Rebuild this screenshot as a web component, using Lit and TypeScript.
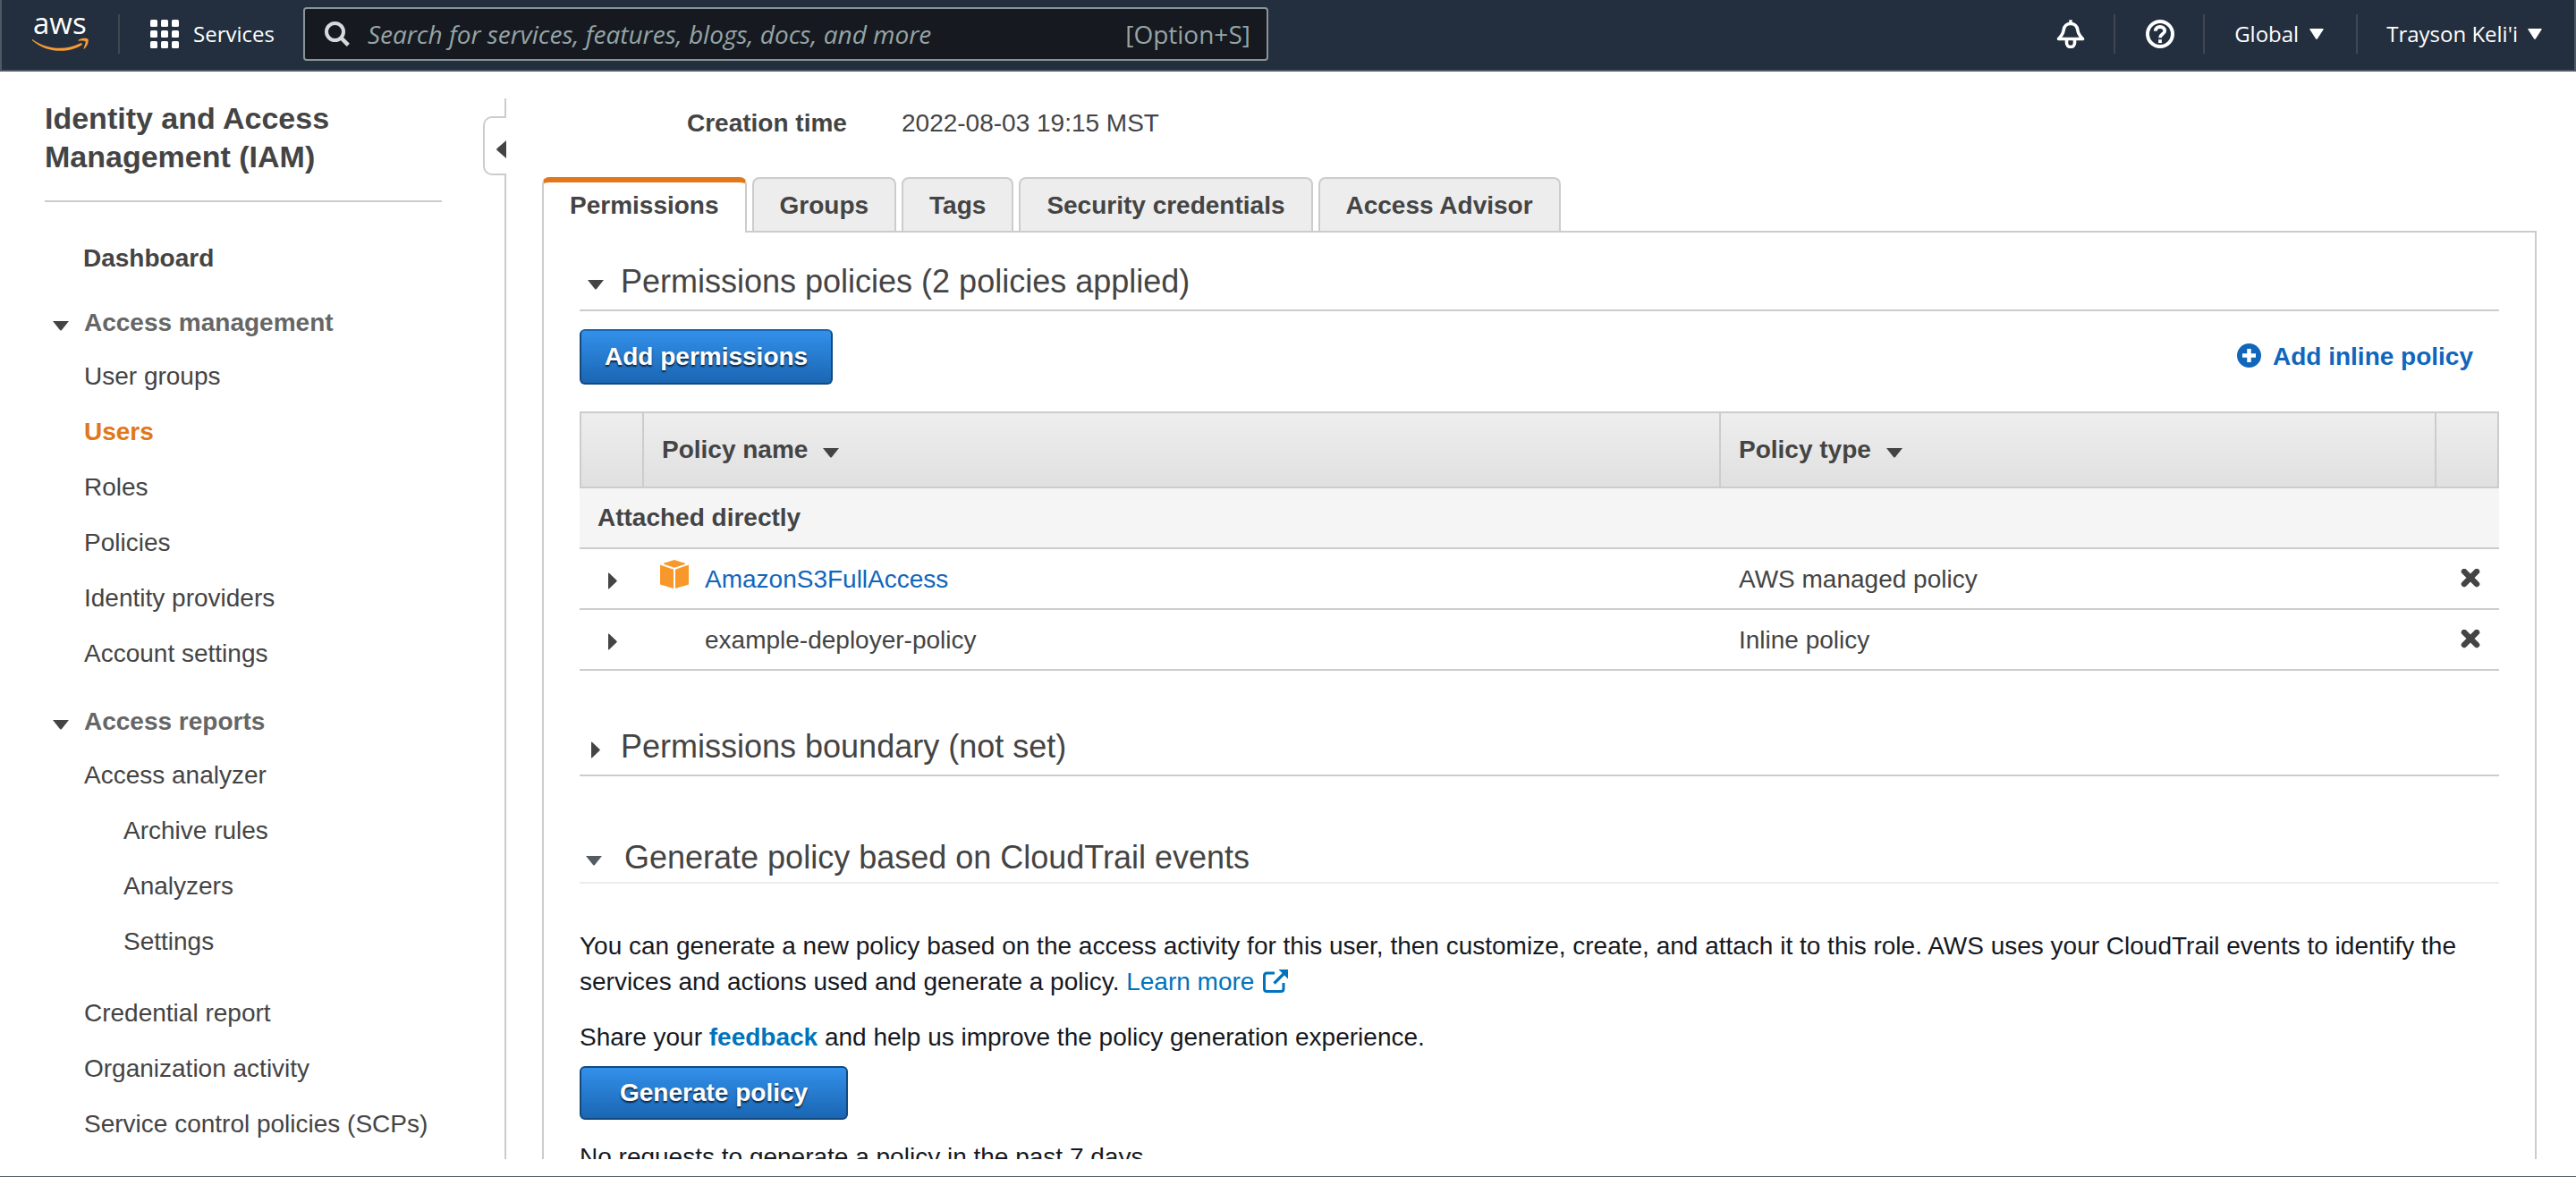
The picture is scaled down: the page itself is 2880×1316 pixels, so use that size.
import { LitElement, html, css, svg } from "lit";
import { customElement, state } from "lit/decorators.js";
import { classMap } from "lit/directives/class-map.js";

interface NavItem {
  label: string;
  nested?: boolean;
  spaced?: boolean;
}

interface NavGroup {
  label: string;
  items: NavItem[];
}

interface Policy {
  name: string;
  type: string;
  managed: boolean;
}

const NAV_GROUPS: NavGroup[] = [
  {
    label: "Access management",
    items: [
      { label: "User groups" },
      { label: "Users" },
      { label: "Roles" },
      { label: "Policies" },
      { label: "Identity providers" },
      { label: "Account settings" },
    ],
  },
  {
    label: "Access reports",
    items: [
      { label: "Access analyzer" },
      { label: "Archive rules", nested: true },
      { label: "Analyzers", nested: true },
      { label: "Settings", nested: true },
      { label: "Credential report", spaced: true },
      { label: "Organization activity" },
      { label: "Service control policies (SCPs)" },
    ],
  },
];

const TABS = ["Permissions", "Groups", "Tags", "Security credentials", "Access Advisor"];

const POLICIES: Policy[] = [
  { name: "AmazonS3FullAccess", type: "AWS managed policy", managed: true },
  { name: "example-deployer-policy", type: "Inline policy", managed: false },
];

/* Disclosure arrow, drawn slightly below the middle of its line. */
const arrow = (open: boolean) => html`
  <svg class="arrow" width="18" height="26" viewBox="0 0 18 26" aria-hidden="true">
    ${open
      ? svg`<path d="M0 11h18L10 21q-1 1-2 0z" fill="currentColor" />`
      : svg`<path d="M4 8q0-1 1-.2L13.400 15.800q.8.7 0 1.400L5 25.300q-1 .6-1-.4z" fill="currentColor" />`}
  </svg>
`;

const menuArrow = html`
  <svg width="16" height="12" viewBox="0 0 16 12" aria-hidden="true">
    <path d="M1 0h14q1.200 0 .6 1L9 11.300q-1 1.200-2 0L.4 1Q-.2 0 1 0z" fill="#fff" />
  </svg>
`;

@customElement("console-header")
export class ConsoleHeader extends LitElement {
  static styles = css`
    :host {
      display: block;
      font-family: "Open Sans", "Noto Sans", sans-serif;
    }
    .bar {
      display: flex;
      align-items: center;
      box-sizing: border-box;
      height: 80px;
      padding: 0 36px 2px 34px;
      background: #232f3e;
      border: 2px solid #4f5964;
      border-top: 0;
      color: #fff;
    }
    svg {
      display: block;
      flex: none;
    }
    .logo-text {
      font-family: "Open Sans", "Noto Sans", sans-serif;
      font-size: 33px;
      font-weight: 500;
    }
    .divider {
      flex: none;
      width: 2px;
      height: 44px;
      background: #414750;
    }
    .divider.first {
      margin-left: 33px;
    }
    button {
      display: flex;
      align-items: center;
      padding: 0;
      background: none;
      border: 0;
      color: #fff;
      font: 500 24px/40px "Open Sans", "Noto Sans", sans-serif;
      white-space: nowrap;
    }
    .services {
      gap: 16px;
      margin: 0 32px 0 34px;
    }
    .search {
      display: flex;
      align-items: center;
      flex: 0 1 1079px;
      box-sizing: border-box;
      height: 60px;
      padding: 0 18px 0 22px;
      background: #16191f;
      border: 2px solid #879596;
      border-radius: 4px;
      color: #95a5a6;
      font-size: 28px;
      line-height: 40px;
    }
    .search input {
      flex: 1;
      min-width: 0;
      height: 52px;
      margin-left: 20px;
      padding: 0;
      background: none;
      border: 0;
      outline: 0;
      color: #fff;
      font: inherit;
    }
    .search input::placeholder {
      color: #95a5a6;
      font-style: italic;
      opacity: 1;
    }
    .actions {
      display: flex;
      align-items: center;
      margin-left: auto;
    }
    .icon {
      margin: 0 32px 0 34px;
    }
    .menu {
      gap: 12px;
      margin: 0 36px 0 33px;
    }
    .menu.last {
      gap: 11px;
      margin: 0 0 0 32px;
    }
  `;

  render() {
    return html`
      <header class="bar">
        <a href="#home" aria-label="aws">
          <svg width="63" height="72" viewBox="0 -14 63 72">
            <text class="logo-text" x="1" y="22" fill="#fff">aws</text>
            <path
              d="M.3 28C18 40.500 38 40 53.500 32.500c2-.9 3.400.8 1.700 2C40.500 43.500 17 44 0 29.200-.3 28.500 0 27.800.3 28z"
              fill="#f79a32"
            />
            <path
              d="M51.500 28.800c2.800-2.300 9.600-2.600 10.900-1 1.200 1.700-.4 7.700-4 10.700-.7.500-1.200.2-.9-.5 1-2.500 2.700-6.700 2-7.700-.8-1.100-5-.9-7.200-.6-.9.100-1.200-.5-.8-.9z"
              fill="#f79a32"
            />
          </svg>
        </a>
        <span class="divider first"></span>
        <button class="services" type="button">
          <svg width="32" height="32" viewBox="0 0 32 32" fill="#fff" aria-hidden="true">
            ${[0, 12, 24].map((y) =>
              [0, 12, 24].map((x) => svg`<rect x=${x} y=${y} width="8" height="8" rx="1.500" />`)
            )}
          </svg>
          <span>Services</span>
        </button>
        <label class="search">
          <svg width="28" height="28" viewBox="0 0 28 28" fill="none" stroke="#d5dbdb" aria-hidden="true">
            <circle cx="11.500" cy="11.500" r="9.500" stroke-width="4" />
            <path d="M18 18l8.300 8.300" stroke-width="4.500" />
          </svg>
          <input type="search" placeholder="Search for services, features, blogs, docs, and more" />
          <span>[Option+S]</span>
        </label>
        <div class="actions">
          <button class="icon" type="button" aria-label="Notifications">
            <svg width="32" height="32" viewBox="0 0 32 32" fill="none" stroke="#fff" aria-hidden="true">
              <path
                d="M2.500 21.500C6 18 7.500 16 8.200 11.500 9 6.500 11.500 4.500 16 4.500s7 2 7.800 7c.7 4.500 2.200 6.500 5.700 10z"
                stroke-width="3.600"
                stroke-linejoin="round"
              />
              <path d="M16 5V.3" stroke-width="3.600" />
              <path d="M11.500 23v3a4.500 4.500 0 0 0 9 0v-3" stroke-width="3.600" />
            </svg>
          </button>
          <span class="divider"></span>
          <button class="icon" type="button" aria-label="Help">
            <svg width="32" height="32" viewBox="0 0 32 32" fill="none" stroke="#fff" aria-hidden="true">
              <circle cx="16" cy="16" r="14" stroke-width="4" />
              <path
                d="M10.800 12.800C10.800 9.700 13 8 16 8s5.200 1.700 5.200 4.400c0 3.700-5.200 3.700-5.200 7.800"
                stroke-width="3.800"
              />
              <path d="M16 22.200v3.900" stroke-width="3.800" />
            </svg>
          </button>
          <span class="divider"></span>
          <button class="menu" type="button"><span>Global</span>${menuArrow}</button>
          <span class="divider"></span>
          <button class="menu last" type="button"><span>Trayson Keli'i</span>${menuArrow}</button>
        </div>
      </header>
    `;
  }
}

@customElement("side-nav")
export class SideNav extends LitElement {
  @state() private current = "Users";

  static styles = css`
    :host {
      display: flex;
      flex: none;
      padding-top: 30px;
      color: #444;
      font-size: 28px;
    }
    .nav {
      box-sizing: border-box;
      width: 540px;
      padding: 0 46px 0 50px;
    }
    h1 {
      margin: 0;
      padding: 1px 100px 27px 0;
      border-bottom: 2px solid #ccc;
      font-size: 34px;
      line-height: 43px;
    }
    ul {
      margin: 0;
      padding: 0 0 0 44px;
      list-style: none;
    }
    a {
      display: block;
      color: inherit;
      line-height: 62px;
      text-decoration: none;
      white-space: nowrap;
    }
    .dashboard {
      margin: 32px 0 12px 43px;
      font-weight: bold;
    }
    .group {
      margin-bottom: 16px;
    }
    .heading {
      display: flex;
      align-items: center;
      gap: 17px;
      padding: 0 0 0 9px;
      background: none;
      border: 0;
      color: #444;
      font: bold 28px/58px "Liberation Sans", Arial, sans-serif;
    }
    .heading span {
      color: #666;
    }
    .arrow {
      display: block;
      flex: none;
    }
    .nested {
      padding-left: 44px;
    }
    .spaced {
      margin-top: 18px;
    }
    .current {
      color: #e17719;
      font-weight: bold;
    }
    .rail {
      display: flex;
      flex-direction: column;
      align-items: flex-end;
      width: 26px;
    }
    .line {
      width: 2px;
      height: 20px;
      background: #ccc;
    }
    .line.rest {
      flex: 1;
    }
    .handle {
      display: flex;
      align-items: center;
      justify-content: flex-end;
      box-sizing: border-box;
      width: 26px;
      height: 66px;
      padding: 7px 0 0;
      background: #fff;
      border: 2px solid #ccc;
      border-right: 0;
      border-radius: 10px 0 0 10px;
    }
  `;

  render() {
    return html`
      <nav class="nav" aria-label="IAM">
        <h1>Identity and Access Management (IAM)</h1>
        <a class="dashboard" href="#dashboard">Dashboard</a>
        ${NAV_GROUPS.map(
          (group) => html`
            <div class="group">
              <button class="heading" type="button" aria-expanded="true">
                ${arrow(true)}<span>${group.label}</span>
              </button>
              <ul>
                ${group.items.map(
                  (item) => html`
                    <li class=${classMap({ nested: !!item.nested, spaced: !!item.spaced })}>
                      <a
                        class=${classMap({ current: item.label === this.current })}
                        href="#nav"
                        @click=${() => (this.current = item.label)}
                        >${item.label}</a
                      >
                    </li>
                  `
                )}
              </ul>
            </div>
          `
        )}
      </nav>
      <div class="rail">
        <span class="line"></span>
        <button class="handle" type="button" aria-label="Collapse navigation">
          <svg width="11" height="20" viewBox="0 0 11 20" aria-hidden="true">
            <path d="M11 0v20L.6 11q-1-1 0-2z" fill="#444" />
          </svg>
        </button>
        <span class="line rest"></span>
      </div>
    `;
  }
}

@customElement("user-details")
export class UserDetails extends LitElement {
  @state() private tab = "Permissions";

  static styles = css`
    :host {
      display: flex;
      flex: 1;
      flex-direction: column;
      min-width: 0;
      padding: 38px 44px 0 40px;
      color: #444;
      font-size: 28px;
      line-height: 40px;
    }
    svg {
      display: block;
      flex: none;
    }
    a {
      color: #1166bb;
      text-decoration: none;
    }
    .summary {
      display: grid;
      grid-template-columns: 240px 1fr;
      margin: 0 0 40px;
      padding-left: 162px;
    }
    dt {
      font-weight: bold;
    }
    dd {
      margin: 0;
    }
    .tabs {
      display: flex;
      flex: none;
      gap: 6px;
    }
    .tab {
      padding: 10px 29px 8px;
      background: #ededed;
      border: 2px solid #ccc;
      border-bottom: 0;
      border-radius: 8px 8px 0 0;
      color: #444;
      font: bold 28px/40px "Liberation Sans", Arial, sans-serif;
    }
    .tab.selected {
      z-index: 1;
      margin-bottom: -2px;
      padding: 6px 29px 10px;
      background: #fff;
      border-top: 6px solid #e17719;
    }
    .panel {
      flex: 1;
      padding: 31px 40px 0;
      border: 2px solid #ccc;
      border-bottom: 0;
    }
    h2 {
      margin: 0;
      padding-bottom: 7px;
      border-bottom: 2px solid #ccc;
      font-size: 36px;
      font-weight: normal;
    }
    .toggle {
      display: flex;
      align-items: center;
      gap: 19px;
      padding: 0 0 0 9px;
      background: none;
      border: 0;
      color: #444;
      font: 36px/48px "Liberation Sans", Arial, sans-serif;
    }
    .boundary {
      margin-top: 61px;
    }
    .generate {
      margin-top: 67px;
      padding-bottom: 3px;
      border-color: #eaeded;
    }
    .generate .toggle {
      gap: 25px;
      padding-left: 7px;
    }
    .generate .arrow {
      color: #545b64;
    }
    .toolbar {
      display: flex;
      align-items: center;
      justify-content: space-between;
      margin: 20px 0 30px;
      padding-right: 29px;
    }
    .primary {
      height: 62px;
      padding: 0 26px;
      background: linear-gradient(#3390ea, #1a66b3);
      border: 2px solid #12497f;
      border-top-color: #1a66b3;
      border-radius: 6px;
      color: #fff;
      font: bold 28px/40px "Liberation Sans", Arial, sans-serif;
      text-shadow: 0 2px 2px rgba(0, 0, 0, 0.7);
    }
    .primary.wide {
      height: 60px;
      padding: 0 43px;
      border-color: #12497f;
    }
    .inline-link {
      display: flex;
      align-items: center;
      gap: 13px;
      font-weight: bold;
    }
    table {
      width: 100%;
      border-spacing: 0;
      table-layout: fixed;
    }
    th,
    td {
      padding: 0;
      border-bottom: 2px solid #ccc;
      text-align: left;
    }
    .head th {
      height: 82px;
      padding-left: 20px;
      background: linear-gradient(#eee, #e0e0e0);
      border-top: 2px solid #ccc;
      border-right: 2px solid #ccc;
    }
    .head .col-expand {
      width: 48px;
      border-left: 2px solid #ccc;
    }
    .head .col-type {
      width: 778px;
    }
    .head .col-remove {
      width: 48px;
    }
    .sort {
      display: flex;
      align-items: center;
      gap: 17px;
      padding: 0;
      background: none;
      border: 0;
      color: #444;
      font: bold 28px/40px "Liberation Sans", Arial, sans-serif;
    }
    .section {
      height: 66px;
      padding-left: 20px;
      background: #f5f5f5;
    }
    td {
      height: 40px;
      padding: 14px 0 12px 20px;
    }
    td.expand {
      padding: 12px 0 14px 28px;
    }
    td.name {
      padding-left: 18px;
    }
    td.remove {
      padding-left: 27px;
    }
    .icon-button {
      display: block;
      padding: 0;
      background: none;
      border: 0;
      color: #444;
    }
    .policy {
      display: grid;
      grid-template-columns: 32px 1fr;
      align-items: center;
      gap: 18px;
      height: 40px;
    }
    .cube {
      margin: -2px 0;
    }
    .copy {
      margin: 0;
      color: #16191f;
    }
    .copy a {
      color: #0073bb;
    }
    .intro {
      margin: 50px 0 22px;
    }
    .external {
      display: inline-block;
      margin-left: 10px;
      vertical-align: -3px;
    }
    .feedback {
      margin-bottom: 12px;
    }
    .status {
      margin-top: 22px;
    }
  `;

  private renderPolicy(policy: Policy) {
    return html`
      <tr>
        <td class="expand">
          <button class="icon-button" type="button" aria-label="Expand ${policy.name}">${arrow(false)}</button>
        </td>
        <td class="name">
          <div class="policy">
            ${policy.managed
              ? html`
                  <svg class="cube" width="32" height="44" viewBox="0 0 32 44" fill="#f9982a" aria-hidden="true">
                    <path d="M16 0l12 3.800v1L16 8.800 4 4.800v-1z" />
                    <path d="M0 5.500l15 5.300V32L0 27.500z" />
                    <path d="M32 5.500l-15 5.300V32l15-4.500z" />
                  </svg>
                  <a href="#policy">${policy.name}</a>
                `
              : html`<span></span><span>${policy.name}</span>`}
          </div>
        </td>
        <td>${policy.type}</td>
        <td class="remove">
          <button class="icon-button" type="button" aria-label="Detach ${policy.name}">
            <svg width="22" height="24" viewBox="0 0 22 24" aria-hidden="true">
              <path d="M4 3l14 14M18 3L4 17" stroke="currentColor" stroke-width="6.500" stroke-linecap="round" />
            </svg>
          </button>
        </td>
      </tr>
    `;
  }

  render() {
    return html`
      <dl class="summary">
        <dt>Creation time</dt>
        <dd>2022-08-03 19:15 MST</dd>
      </dl>
      <div class="tabs" role="tablist">
        ${TABS.map(
          (tab) => html`
            <button
              class=${classMap({ tab: true, selected: tab === this.tab })}
              type="button"
              role="tab"
              aria-selected=${tab === this.tab ? "true" : "false"}
              @click=${() => (this.tab = tab)}
            >
              ${tab}
            </button>
          `
        )}
      </div>
      <section class="panel">
        <h2>
          <button class="toggle" type="button">${arrow(true)}Permissions policies (2 policies applied)</button>
        </h2>
        <div class="toolbar">
          <button class="primary" type="button">Add permissions</button>
          <a class="inline-link" href="#inline">
            <svg width="27" height="31" viewBox="0 0 27 31" aria-hidden="true">
              <circle cx="13.500" cy="13.500" r="13.500" fill="#1166bb" />
              <path d="M13.500 6v15M6 13.500h15" stroke="#fff" stroke-width="4.500" />
            </svg>
            Add inline policy
          </a>
        </div>
        <table>
          <thead>
            <tr class="head">
              <th class="col-expand"></th>
              <th><button class="sort" type="button">Policy name${arrow(true)}</button></th>
              <th class="col-type"><button class="sort" type="button">Policy type${arrow(true)}</button></th>
              <th class="col-remove"></th>
            </tr>
          </thead>
          <tbody>
            <tr>
              <th class="section" colspan="4">Attached directly</th>
            </tr>
            ${POLICIES.map((policy) => this.renderPolicy(policy))}
          </tbody>
        </table>
        <h2 class="boundary">
          <button class="toggle" type="button">${arrow(false)}Permissions boundary (not set)</button>
        </h2>
        <h2 class="generate">
          <button class="toggle" type="button">${arrow(true)}Generate policy based on CloudTrail events</button>
        </h2>
        <p class="copy intro">
          You can generate a new policy based on the access activity for this user, then customize, create, and attach
          it to this role. AWS uses your CloudTrail events to identify the services and actions used and generate a
          policy.
          <a href="#learn"
            >Learn more<svg
              class="external"
              width="28"
              height="26"
              viewBox="0 0 28 26"
              fill="none"
              stroke="#0073bb"
              aria-hidden="true"
            >
              <path d="M13 4H4.500Q1.500 4 1.500 7v14.500q0 3 3 3H20q3 0 3-3V15" stroke-width="3" />
              <path d="M12.500 15.500L24.500 3.500" stroke-width="3.200" />
              <path d="M17.500 0H28v10.500z" fill="#0073bb" stroke="none" /></svg
          ></a>
        </p>
        <p class="copy feedback">
          Share your <a href="#feedback"><b>feedback</b></a> and help us improve the policy generation experience.
        </p>
        <button class="primary wide" type="button">Generate policy</button>
        <p class="copy status">No requests to generate a policy in the past 7 days.</p>
      </section>
    `;
  }
}

@customElement("app-root")
export class AppRoot extends LitElement {
  static styles = css`
    :host {
      display: flex;
      flex-direction: column;
      box-sizing: border-box;
      height: 100vh;
      padding-bottom: 19px;
      overflow: hidden;
      background: #fff;
      border-bottom: 1px solid #545b64;
      font-family: "Liberation Sans", Arial, sans-serif;
    }
    .header {
      flex: none;
    }
    .body {
      display: flex;
      flex: 1;
      min-height: 0;
      overflow: hidden;
    }
  `;

  render() {
    return html`
      <console-header class="header"></console-header>
      <main class="body">
        <side-nav></side-nav>
        <user-details></user-details>
      </main>
    `;
  }
}
